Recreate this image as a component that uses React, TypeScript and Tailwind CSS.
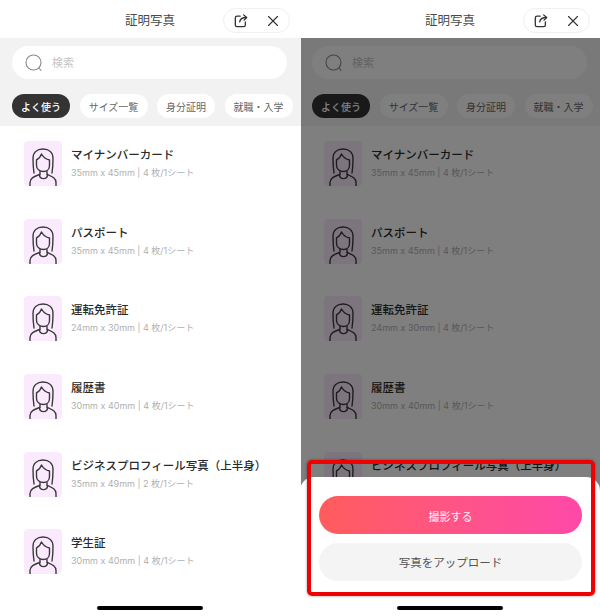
import { X } from "lucide-react";

const font = "font-['Noto_Sans_CJK_JP','Noto_Sans',sans-serif]";

const items = [
    { title: "マイナンバーカード", size: "35mm x 45mm | 4 枚/1シート" },
    { title: "パスポート", size: "35mm x 45mm | 4 枚/1シート" },
    { title: "運転免許証", size: "24mm x 30mm | 4 枚/1シート" },
    { title: "履歴書", size: "30mm x 40mm | 4 枚/1シート" },
    { title: "ビジネスプロフィール写真（上半身）", size: "35mm x 49mm | 2 枚/1シート" },
    { title: "学生証", size: "30mm x 40mm | 4 枚/1シート" },
];

function PersonIcon() {
    return (
        <svg width="38" height="45" viewBox="0 0 38 45" fill="none" stroke="#3a3a3a" strokeWidth="1.4" strokeLinecap="round" strokeLinejoin="round">
            <path d="M10 32C9.5 29 9 22 9 17.5C9 11.5 13 8 19 8C25 8 29 11.5 29 17.5C29 22 28.5 29 28 32" />
            <path d="M17.5 13C19.5 16.5 23 18.5 25.5 19V24.5C25.5 28 23 30.5 19.5 30.5C15.5 30.5 12.5 28 12.5 24.5V19C14.5 18 16.5 16 17.5 13Z" />
            <path d="M16 30.5V33.5M23 30.5V33.5" />
            <path d="M15.5 33.5C15.5 39 23.5 39 23.5 33.5" />
            <path d="M6 45V41.5C6 37 10 35.5 15.5 33.5M32 45V41.5C32 37 28 35.5 23.5 33.5" />
        </svg>
    );
}

function ShareIcon() {
    return (
        <svg width="14" height="14" viewBox="0 0 16 16" fill="none" stroke="#333333" strokeWidth="1.5" strokeLinecap="round" strokeLinejoin="round">
            <path d="M7 2.5H3.5C2.4 2.5 1.5 3.4 1.5 4.5V12.5C1.5 13.6 2.4 14.5 3.5 14.5H11C12.1 14.5 13 13.6 13 12.5V9" />
            <path d="M6.5 9C7 5.5 9.5 4 14 4" />
            <path d="M11 1L14.5 4L11.5 7" />
        </svg>
    );
}

function Panel({ dimmed }: { dimmed?: boolean }) {
    const rows = dimmed ? items.slice(0, 5) : items;

    return (
        <div className={`relative w-[300px] h-[616px] shrink-0 overflow-hidden bg-white ${font}`}>
            <header className="relative flex items-center justify-center h-[38px]">
                <span className="mt-[2px] text-[12.5px] text-[#4a4a4a]">証明写真</span>
                <div className="absolute right-[10px] top-[8px] flex items-center justify-between w-[67px] h-[25px] pl-[10px] pr-[7px] rounded-full border border-[#f0f0f0]">
                    <ShareIcon />
                    <X size={18} strokeWidth={1.5} color="#333333" />
                </div>
            </header>

            <div className="h-[88px] bg-[#f2f2f2] pt-[8px] pl-[12px]">
                <div className="flex items-center w-[275px] h-[33px] rounded-full bg-white pl-[13px]">
                    <svg width="18" height="18" viewBox="0 0 18 18" fill="none" stroke="#8a8a8a" strokeWidth="1.1" strokeLinecap="round">
                        <circle cx="8.5" cy="8.5" r="7.5" />
                        <path d="M14 14L16 16.5" />
                    </svg>
                    <span className="ml-[9px] text-[11px] text-[#c4c4c4]">検索</span>
                </div>
                <div className="flex gap-[9.5px] mt-[15px] text-[10px] whitespace-nowrap">
                    <span className="flex items-center justify-center w-[58px] h-[24px] rounded-full bg-[#333333] text-white font-medium">よく使う</span>
                    <span className="flex items-center justify-center w-[68px] h-[24px] rounded-full bg-white text-[#666666]">サイズ一覧</span>
                    <span className="flex items-center justify-center w-[58px] h-[24px] rounded-full bg-white text-[#666666]">身分証明</span>
                    <span className="flex items-center justify-center w-[68px] h-[24px] rounded-full bg-white text-[#666666]">就職・入学</span>
                </div>
            </div>

            <ul className="flex flex-col gap-[32.7px] pt-[15px] pl-[24px]">
                {rows.map((item) => (
                    <li key={item.title} className="flex h-[45px]">
                        <div className="w-[38px] h-[45px] rounded-[4px] bg-[#fbeafd] overflow-hidden">
                            <PersonIcon />
                        </div>
                        <div className="ml-[9px]">
                            <p className="mt-[5px] text-[11.5px] leading-[17px] font-medium text-[#2a2a2a] whitespace-nowrap">{item.title}</p>
                            <p className="mt-[3px] text-[9px] leading-[14px] text-[#b0b0b0] font-['Inter','Noto_Sans_CJK_JP',sans-serif] whitespace-nowrap">{item.size}</p>
                        </div>
                    </li>
                ))}
            </ul>

            {dimmed && <div className="absolute left-[1px] right-0 top-[38px] bottom-0 bg-black/50" />}

            {dimmed && (
                <div className="absolute left-0 right-0 bottom-0 h-[139px] rounded-t-[14px] bg-white px-[19px] pt-[19px]">
                    <button className="block w-[263px] h-[38px] pt-[2px] rounded-full bg-gradient-to-r from-[#ff5c5c] to-[#ff48a8] text-[11px] text-white/90">撮影する</button>
                    <button className="block mt-[9px] w-[263px] h-[38px] pt-[2px] rounded-full bg-[#f4f4f4] text-[11.5px] text-[#555555]">写真をアップロード</button>
                </div>
            )}

            <div className="absolute left-[97px] bottom-[6px] w-[106px] h-[4px] rounded-full bg-black" />

            {dimmed && <div className="absolute left-[7px] top-[460px] w-[288px] h-[136px] rounded-[5px] border-[4px] border-[#f00000] shadow-[0_0_3px_rgba(0,0,0,0.4)]" />}
        </div>
    );
}

export default function App() {
    return (
        <div className="flex w-[600px] h-[616px] bg-white overflow-hidden">
            <Panel />
            <Panel dimmed />
        </div>
    );
}
